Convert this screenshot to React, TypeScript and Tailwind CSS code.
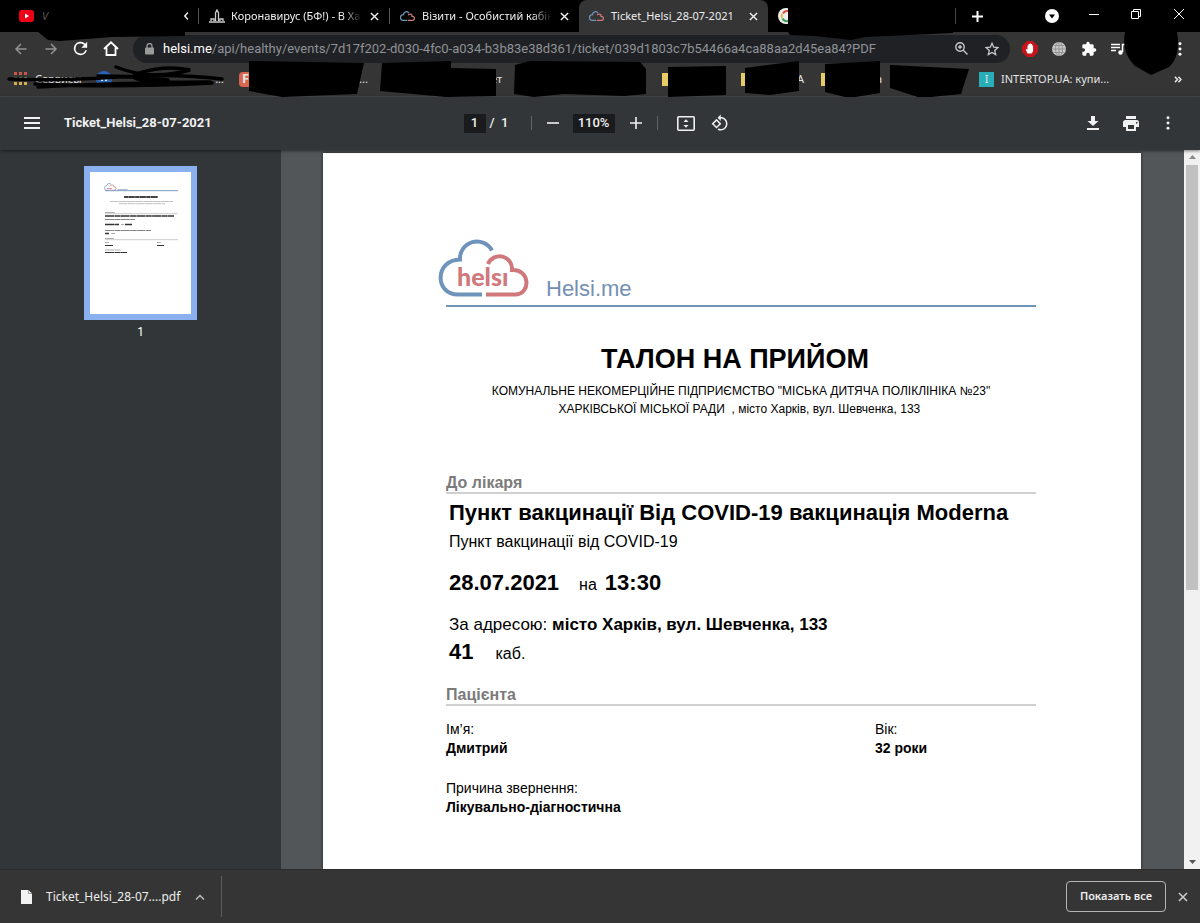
import React from 'react';

function Cloud({ className, stroke = 4, word = true }: { className: string; stroke?: number; word?: boolean }) {
  return (
    <svg viewBox="0 0 92 60" className={className} fill="none" aria-hidden="true">
      <path d="M54 12.500A17 17 0 0 0 22 21.500C-3.500 22-3.500 56.500 20 56.500H44" stroke="#6f94bb" strokeWidth={stroke} />
      <path d="M50 26A12.500 12.500 0 0 1 74 32C92.500 31 93 56.500 77 56.500H48" stroke="#d0787b" strokeWidth={stroke} />
      {word && (
        <text x="19" y="48" fill="#d0787b" className="font-[Lato,sans-serif] text-[25px] font-black">helsı</text>
      )}
    </svg>
  );
}

function X({ className }: { className: string }) {
  return (
    <svg viewBox="0 0 10 10" className={className} stroke="currentColor" strokeWidth="1.6" aria-hidden="true">
      <path d="M1 1 9 9M9 1 1 9" />
    </svg>
  );
}

function Dots() {
  return (
    <svg viewBox="0 0 4 16" className="h-[14px] w-1" fill="currentColor" aria-hidden="true">
      <circle cx="2" cy="2" r="1.700" /><circle cx="2" cy="8" r="1.700" /><circle cx="2" cy="14" r="1.700" />
    </svg>
  );
}

function Tabs() {
  return (
    <div className="flex h-8 items-stretch bg-black text-[11px] text-[#eceef0]">
      <div className="flex w-[198px] items-center pl-[19px]">
        <svg viewBox="0 0 15 12" className="h-3 w-[15px]" aria-hidden="true"><rect width="15" height="12" rx="3" fill="#f00018" /><path d="M6 3.500v5L10 6z" fill="#fff" /></svg>
        <span className="ml-2 italic text-[#555]">V</span>
        <button aria-label="Закрити вкладку" className="ml-auto mr-[10px]"><svg viewBox="0 0 4 8" className="h-2 w-1" fill="none" stroke="currentColor" strokeWidth="1.500" aria-hidden="true"><path d="M4 .5.8 4 4 7.500" /></svg></button>
      </div>
      <div className="my-2 flex w-[191px] items-center border-l border-l-[#555] pl-[10px]">
        <svg viewBox="0 0 16 14" className="h-[14px] w-4 shrink-0" fill="none" stroke="#ccc" strokeWidth="1.300" aria-hidden="true"><path d="M0 13h16M2 12V10h3v2M6.500 12V4L8 1l1.500 3v8M11 12v-2h3v2" /></svg>
        <span className="ml-[6px] w-[131px] whitespace-nowrap [mask-image:linear-gradient(to_right,black_85%,transparent)]">Коронавирус (БФ!) - В Ха</span>
        <button aria-label="Закрити вкладку" className="ml-2"><X className="size-[9px]" /></button>
      </div>
      <div className="my-2 flex w-[190px] items-center border-l border-l-[#555] pl-[10px]">
        <Cloud className="h-[10px] w-[15px]" stroke={8} word={false} />
        <span className="ml-[7px] w-[130px] whitespace-nowrap [mask-image:linear-gradient(to_right,black_85%,transparent)]">Візити - Особистий кабін</span>
        <button aria-label="Закрити вкладку" className="ml-2"><X className="size-[9px]" /></button>
      </div>
      <div className="flex w-[189px] items-center rounded-t-lg bg-[#353535] pl-[10px]">
        <Cloud className="h-[10px] w-[15px]" stroke={8} word={false} />
        <span className="ml-[7px] w-[130px] whitespace-nowrap">Ticket_Helsi_28-07-2021</span>
        <button aria-label="Закрити вкладку" className="ml-2"><X className="size-[9px]" /></button>
      </div>
      <div className="my-2 flex w-[188px] items-center border-r border-r-[#444] pl-[10px]">
        <svg viewBox="0 0 10 16" className="h-4 w-[10px]" aria-hidden="true"><circle cx="8" cy="8" r="8" fill="#eee" /><path d="M10 3a5 5 0 0 0-5 2.500" stroke="#e24b3d" strokeWidth="2" fill="none" /><path d="M4 6a5 5 0 0 0 0 4" stroke="#e9b53a" strokeWidth="2" fill="none" /><path d="M4.500 10.500A5 5 0 0 0 10 13" stroke="#3a9d54" strokeWidth="2" fill="none" /></svg>
      </div>
      <button aria-label="Нова вкладка" className="ml-4 text-white"><svg viewBox="0 0 11 11" className="size-[11px]" stroke="currentColor" strokeWidth="2" aria-hidden="true"><path d="M5.500 0v11M0 5.500h11" /></svg></button>
      <div className="ml-auto flex items-center pr-4 text-white">
        <button aria-label="Пошук вкладок"><svg viewBox="0 0 14 14" className="size-[14px]" aria-hidden="true"><circle cx="7" cy="7" r="7" fill="#fff" /><path d="M4 5.500h6L7 9.500z" fill="#000" /></svg></button>
        <button aria-label="Згорнути" className="ml-[30px] pb-1"><svg viewBox="0 0 10 10" className="size-[10px]" stroke="currentColor" aria-hidden="true"><path d="M0 5.500h10" /></svg></button>
        <button aria-label="Відновити" className="ml-8 pb-1"><svg viewBox="0 0 10 10" className="size-[10px]" fill="none" stroke="currentColor" aria-hidden="true"><path d="M.5 2.500h7v7h-7zM2.500 2V.5h7v7H8" /></svg></button>
        <button aria-label="Закрити" className="ml-[33px] pb-1"><svg viewBox="0 0 10 10" className="size-[10px]" stroke="currentColor" aria-hidden="true"><path d="M0 0l10 10M10 0L0 10" /></svg></button>
      </div>
    </div>
  );
}

const arrow = 'M12 6H1.500M6.500 1l-5 5 5 5';

function AddressBar() {
  return (
    <div className="flex h-8 items-center pl-[14px] pr-[18px] pt-px text-white">
      <button aria-label="Назад" className="text-[#929292]"><svg viewBox="0 0 13 12" className="h-3 w-[14px]" fill="none" stroke="currentColor" strokeWidth="1.500" aria-hidden="true"><path d={arrow} /></svg></button>
      <button aria-label="Вперед" className="ml-4 rotate-180 text-[#929292]"><svg viewBox="0 0 13 12" className="h-3 w-[14px]" fill="none" stroke="currentColor" strokeWidth="1.500" aria-hidden="true"><path d={arrow} /></svg></button>
      <button aria-label="Оновити" className="ml-[15px]"><svg viewBox="3 3 18 18" className="size-[15px]" fill="currentColor" aria-hidden="true"><path d="M17.650 6.350A8 8 0 1 0 19.730 14h-2.080A6 6 0 1 1 12 6c1.660 0 3.140.69 4.220 1.780L13 11h7V4z" /></svg></button>
      <button aria-label="Головна" className="ml-[15px]"><svg viewBox="0 0 16 15" className="h-[15px] w-4" fill="none" stroke="currentColor" strokeWidth="1.800" aria-hidden="true"><path d="M1 8 8 1.300 15 8M3.500 6.500V14h9V6.500" /></svg></button>
      <div className="ml-[14px] flex h-7 w-[877px] items-center rounded-full bg-[#202124] pl-3 pr-[11px]">
        <svg viewBox="0 0 9 12" className="h-3 w-[9px]" fill="#9a9a9a" aria-hidden="true"><rect y="4.500" width="9" height="7" rx="1" /><path d="M2 5V3a2.500 2.500 0 0 1 5 0v2" fill="none" stroke="#9a9a9a" strokeWidth="1.300" /></svg>
        <span className="ml-[9px] whitespace-nowrap font-[Roboto,sans-serif] text-[13px] text-[#8f9398]"><span className="text-white">helsi.me</span>/api/healthy/events/7d17f202-d030-4fc0-a034-b3b83e38d361/ticket/039d1803c7b54466a4ca88aa2d45ea84?PDF</span>
        <button aria-label="Масштаб" className="ml-auto text-[#c8c8c8]"><svg viewBox="0 0 13 13" className="size-[13px]" fill="none" stroke="currentColor" strokeWidth="1.400" aria-hidden="true"><circle cx="5" cy="5" r="4.200" /><path d="M8 8l4.500 4.500M5 3v4M3 5h4" /></svg></button>
        <button aria-label="Додати закладку" className="ml-[17px] text-[#c8c8c8]"><svg viewBox="0 0 14 14" className="size-[14px]" fill="none" stroke="currentColor" strokeWidth="1.300" aria-hidden="true"><path d="M7 1.300l1.700 3.900 4.200.4-3.200 2.800 1 4.200L7 10.400l-3.700 2.200 1-4.200L1.100 5.600l4.200-.4z" /></svg></button>
      </div>
      <button aria-label="AdBlock" className="ml-3"><svg viewBox="0 0 16 16" className="size-4" aria-hidden="true"><path d="M5 0h6l5 5v6l-5 5H5l-5-5V5z" fill="#c4161c" /><path d="M5.500 12.500 3.700 8.500l1-.5.8 1V4.500h1V3h1.200v-.500h1.200V3h1.200v1.500h1V9c0 2-1 3-1.600 3.500z" fill="#fff" /></svg></button>
      <button aria-label="Розширення VPN" className="ml-[14px]"><svg viewBox="0 0 14 14" className="size-[14px]" aria-hidden="true"><circle cx="7" cy="7" r="7" fill="#c9c9c9" /><path d="M7 0v14M0 7h14M1.500 3.500h11M1.500 10.500h11" stroke="#888" strokeWidth=".8" /><ellipse cx="7" cy="7" rx="3.500" ry="7" fill="none" stroke="#888" strokeWidth=".8" /></svg></button>
      <button aria-label="Розширення" className="ml-[15px]"><svg viewBox="0 0 24 24" className="size-4" fill="currentColor" aria-hidden="true"><path d="M20.500 11H19V7a2 2 0 0 0-2-2h-4V3.500a2.500 2.500 0 0 0-5 0V5H4a2 2 0 0 0-2 2v3.800h1.500a2.700 2.700 0 0 1 0 5.400H2V20a2 2 0 0 0 2 2h3.800v-1.500a2.700 2.700 0 0 1 5.400 0V22H17a2 2 0 0 0 2-2v-4h1.500a2.500 2.500 0 0 0 0-5z" /></svg></button>
      <button aria-label="Музика" className="ml-[14px]"><svg viewBox="0 0 14 12" className="h-3 w-[14px]" fill="none" stroke="currentColor" strokeWidth="1.500" aria-hidden="true"><path d="M0 1.500h9M0 4.500h9M0 7.500h5M11.500 9V1.500H14" /><circle cx="9.500" cy="9.500" r="1.500" fill="currentColor" /></svg></button>
      <button aria-label="Меню браузера" className="ml-auto"><Dots /></button>
    </div>
  );
}

function Bookmarks() {
  return (
    <div className="flex h-[30px] items-center pl-[14px] pr-[18px] text-[11px] text-[#e4e4e4]">
      <svg viewBox="0 0 14 14" className="h-[14px] w-[14px]" aria-hidden="true">
        {[0, 5, 10].map((x) => [0, 5, 10].map((y) => <rect key={x + '-' + y} x={x} y={y} width="3" height="3" fill={y === 0 ? '#c9584c' : y === 5 ? '#77a46a' : '#d3b04d'} />))}
      </svg>
      <span className="ml-[7px] w-[61px]">Сервисы</span>
      <svg viewBox="0 0 16 16" className="size-4" aria-hidden="true"><circle cx="8" cy="8" r="8" fill="#2c62b4" /><path d="M4 6l2 4 2-4 2 4 2-4" stroke="#fff" fill="none" /></svg>
      <span className="ml-2 w-[104px] whitespace-nowrap text-right">...</span>
      <span className="ml-[15px] flex h-[15px] w-[15px] items-center rounded-sm bg-[#d9674f] pl-[3px] text-[13px] font-bold">F</span>
      <span className="ml-[105px] w-[10px]">...</span>
      <span className="ml-[122px] w-3">ет</span>
      <span className="ml-[159px] h-[13px] w-[6px] bg-[#e8cd67]" />
      <span className="ml-[50px] w-[7px]">ы</span>
      <span className="ml-[16px] h-[13px] w-[6px] bg-[#e8cd67]" />
      <span className="ml-[50px] w-[8px]">А</span>
      <span className="ml-[16px] h-[13px] w-[4px] bg-[#e8cd67]" />
      <span className="ml-[51px] w-[7px]">а</span>
      <span className="ml-[96px] flex h-[15px] w-[15px] items-center justify-center bg-[#27aeb9]">I</span>
      <a href="#intertop" className="ml-[7px] whitespace-nowrap">INTERTOP.UA: купи...</a>
      <button aria-label="Інші закладки" className="ml-auto"><svg viewBox="0 0 9 8" className="h-[7px] w-2" fill="none" stroke="currentColor" strokeWidth="1.700" aria-hidden="true"><path d="M1 1l3 3-3 3M5 1l3 3-3 3" /></svg></button>
    </div>
  );
}

function Scribbles() {
  return (
    <svg width="1200" height="98" viewBox="0 0 1200 98" className="pointer-events-none absolute left-0 top-0" aria-hidden="true">
      <path d="M37 31H185V36L112 37 60 41 48 40z M787 30H953V33L865 37 851 40 815 36 790 35z M249 61l115 2-7 31-75 3-33-6z M382 63l69-2v7l45 1v27l-50 1-66-6z M515 65l15-4 110 1 6 7v25l-22 2-60-2-30 3-20-3z M668 67l58-1v29l-58 2z M745 68l54-7v30l-29 4-25-2z M825 64l55-3v32l-31 5-24-6z M890 65l79 4-8 25-40 4-31-10z" fill="#000" />
      <path d="M1125 32h52q4 24-8 35l-18 8-16-9q-14-14-10-34z" fill="#000" />
      <path d="M9 79q50 2 108-2t105 2M35 84q80 4 177-1M38 87q70-4 172-5M116 67q35 14 74 3-25-5-50 3t50 10M98 76q40 0 70 4" stroke="#000" strokeWidth="3.500" fill="none" strokeLinecap="round" />
    </svg>
  );
}

function PdfToolbar() {
  return (
    <div className="relative z-10 grid h-[53px] grid-cols-[1fr_auto_1fr] items-center bg-[#323639] pb-px font-[Roboto,sans-serif] text-[13px] text-[#f1f1f1] shadow-[0_1px_3px_rgba(0,0,0,0.5)]">
      <div className="flex items-center pl-6">
        <button aria-label="Меню"><svg viewBox="0 0 16 12" className="h-3 w-4" stroke="currentColor" strokeWidth="2" aria-hidden="true"><path d="M0 1h16M0 6h16M0 11h16" /></svg></button>
        <h1 className="ml-6 font-bold">Ticket_Helsi_28-07-2021</h1>
      </div>
      <div className="mr-2 flex items-center font-medium">
        <input aria-label="Сторінка" defaultValue="1" className="h-[19px] w-[22px] bg-[#191b1c] text-center" />
        <span className="ml-1 w-[41px] whitespace-pre">/  1</span>
        <span className="h-[14px] border-l border-[#606366]" />
        <button aria-label="Зменшити" className="ml-[15px]"><svg viewBox="0 0 12 12" className="size-3" stroke="currentColor" strokeWidth="1.600" aria-hidden="true"><path d="M0 6h12" /></svg></button>
        <input aria-label="Масштаб сторінки" defaultValue="110%" className="ml-[14px] h-[19px] w-[42px] bg-[#191b1c] text-center" />
        <button aria-label="Збільшити" className="ml-[15px]"><svg viewBox="0 0 12 12" className="size-3" stroke="currentColor" strokeWidth="1.600" aria-hidden="true"><path d="M0 6h12M6 0v12" /></svg></button>
        <span className="ml-[15px] h-[14px] border-l border-[#606366]" />
        <button aria-label="За розміром сторінки" className="ml-[19px]"><svg viewBox="0 0 18 15" className="h-[15px] w-[18px]" fill="none" stroke="currentColor" strokeWidth="1.600" aria-hidden="true"><rect x=".8" y=".8" width="16.400" height="13.400" rx="1" /><path d="M6.500 5.900 9 3.200l2.500 2.700zM6.500 9.100 9 11.800l2.500-2.700z" fill="currentColor" stroke="none" /></svg></button>
        <button aria-label="Повернути" className="ml-4"><svg viewBox="0 0 24 24" className="size-[18px]" fill="currentColor" aria-hidden="true"><path d="M7.340 6.410L.86 12.900l6.490 6.480 6.490-6.480-6.500-6.490zM3.690 12.900l3.660-3.660L11 12.900l-3.660 3.660-3.650-3.660zm15.670-6.260C17.610 4.880 15.300 4 13 4V.76L8.760 5 13 9.240V6c1.790 0 3.580.68 4.950 2.050 2.730 2.730 2.730 7.170 0 9.900C16.580 19.320 14.790 20 13 20c-.97 0-1.940-.21-2.840-.61l-1.490 1.490C10.020 21.620 11.510 22 13 22c2.300 0 4.610-.88 6.360-2.640 3.520-3.510 3.520-9.210 0-12.720z" /></svg></button>
      </div>
      <div className="flex items-center justify-end pr-[30px]">
        <button aria-label="Завантажити"><svg viewBox="0 0 12 14" className="h-[14px] w-3" fill="currentColor" aria-hidden="true"><path d="M4 0h4v5h3.500L6 10 .5 5H4zM0 12h12v2H0z" /></svg></button>
        <button aria-label="Друк" className="ml-6"><svg viewBox="0 0 16 15" className="h-[15px] w-4" fill="currentColor" aria-hidden="true"><path d="M3 0h10v3H3zM2.500 4h11A2.500 2.500 0 0 1 16 6.500V11h-3v4H3v-4H0V6.500A2.500 2.500 0 0 1 2.500 4zM5 9v4h6V9zM13 6v1.500h1.500V6z" fillRule="evenodd" /></svg></button>
        <button aria-label="Ще" className="ml-[27px]"><Dots /></button>
      </div>
    </div>
  );
}

function Thumbnail() {
  return (
    <aside className="flex w-[281px] shrink-0 flex-col items-center bg-[#323639] pt-4">
      <button aria-label="Сторінка 1" className="bg-[#8ab0f0] p-[6px]">
        <span className="block h-[142px] w-[101px] overflow-hidden bg-white">
          <svg viewBox="0 0 101 142" className="h-full w-full" fill="none" aria-hidden="true">
            <path d="M21 12.200A2.500 2.500 0 0 0 16.800 13.500C13.600 14 14 18.200 16.600 18.200H19.500" stroke="#6f94bb" strokeWidth=".8" />
            <path d="M20 14.200c1.500-2.200 4-1.400 4 .6 2.800.2 2.600 3.400.2 3.400H20M17 16.500h5" stroke="#d0787b" strokeWidth=".8" />
            <path d="M27.500 17.500h10" stroke="#a9bdd6" strokeWidth="1" />
            <path d="M15 18.700h73" stroke="#7d9cc0" />
            <path d="M34 25h34" stroke="#444" strokeWidth="1.800" strokeDasharray="4.500 .3 6 .3" />
            <path d="M20 29.500h63M29 31.700h46" strokeWidth=".6" stroke="#999" strokeDasharray="8 .5" />
            <path d="M15 41.700h73M15 67.700h73" stroke="#aaa" strokeWidth=".6" />
            <g stroke="#333" strokeDasharray="9 .4 6 .3">
              <path d="M15 44h69" strokeWidth="1.700" />
              <path d="M15 47.500h30M15 58.500h46" strokeWidth=".8" stroke="#666" />
              <path d="M15 52.500h14M35 52.500h7M15 61.500h4" strokeWidth="1.600" />
              <path d="M15 40.500h10M31 52.500h3M21 61.500h4M15 66.500h9M15 70.500h4M67 70.500h4M15 78h16" strokeWidth=".6" stroke="#777" />
              <path d="M15 73.500h8M67 73.500h7M15 80.500h22" strokeWidth="1.100" />
            </g>
          </svg>
        </span>
      </button>
      <span className="mt-1 font-[Roboto,sans-serif] text-[12px] leading-4 text-white">1</span>
    </aside>
  );
}

function Ticket() {
  return (
    <article className="ml-[42px] mr-[43px] mt-[3px] min-w-0 flex-1 bg-white pl-[123px] pr-[105px] pt-[85px] font-['Liberation_Sans',sans-serif] text-black shadow-[0_0_3px_rgba(0,0,0,0.6)]">
      <div className="-ml-2 flex h-[63px] items-start">
        <Cloud className="h-[60px] w-[92px]" />
        <a href="#helsi" className="ml-4 self-end text-[22px] leading-6 text-[#7390b4]">Helsi.me</a>
      </div>
      <div className="mt-1 border-t-2 border-[#7094b8]" />
      <h2 className="mt-[36px] pr-3 text-center text-[27px] font-bold leading-8">ТАЛОН НА ПРИЙОМ</h2>
      <p className="mt-[7px] whitespace-pre text-center text-[12px] leading-[18px]">{'КОМУНАЛЬНЕ НЕКОМЕРЦІЙНЕ ПІДПРИЄМСТВО "МІСЬКА ДИТЯЧА ПОЛІКЛІНІКА №23"\nХАРКІВСЬКОЇ МІСЬКОЇ РАДИ  , місто Харків, вул. Шевченка, 133 '}</p>
      <h3 className="mt-[55px] border-b-2 border-[#d0d0d0] text-[16px] font-bold leading-[19px] text-[#7b7b7b]">До лікаря</h3>
      <p className="ml-[3px] mt-[5px] whitespace-nowrap text-[22px] font-bold leading-7">Пункт вакцинації Від COVID-19 вакцинація Moderna</p>
      <p className="ml-[3px] mt-[3px] text-[16px] leading-6">Пункт вакцинації від COVID-19</p>
      <p className="ml-[3px] mt-[15px] flex items-baseline text-[22px] font-bold leading-7">28.07.2021<span className="ml-5 mr-2 text-[16px] font-normal">на</span>13:30</p>
      <p className="ml-[3px] mt-[14px] text-[17px] leading-6">За адресою: <b>місто Харків, вул. Шевченка, 133</b></p>
      <p className="ml-[3px] mt-px flex items-baseline text-[22px] font-bold leading-7">41<span className="ml-[22px] text-[16px] font-normal">каб.</span></p>
      <h3 className="mt-[17px] border-b-2 border-[#d0d0d0] text-[16px] font-bold leading-[19px] text-[#7b7b7b]">Пацієнта</h3>
      <dl className="mt-[14px] grid grid-cols-[429px_1fr] gap-y-[21px] text-[14px] leading-[19px]">
        <div><dt>Ім’я:</dt><dd className="font-bold">Дмитрий</dd></div>
        <div><dt>Вік:</dt><dd className="font-bold">32 роки</dd></div>
        <div><dt>Причина звернення:</dt><dd className="font-bold">Лікувально-діагностична</dd></div>
      </dl>
    </article>
  );
}

export default function App() {
  return (
    <div className="flex h-screen flex-col overflow-hidden bg-[#353535] font-['Noto_Sans','Open_Sans',sans-serif]">
      <header className="relative shrink-0">
        <Tabs />
        <AddressBar />
        <Bookmarks />
        <Scribbles />
      </header>
      <div className="mt-[2px] flex min-h-0 flex-1 flex-col border-t border-[#47494b]">
        <PdfToolbar />
        <main className="flex min-h-0 flex-1 overflow-hidden bg-[#525659]">
          <Thumbnail />
          <Ticket />
          <div className="flex w-4 shrink-0 flex-col items-center bg-[#f1f1f1] py-[5px]" aria-hidden="true">
            <svg viewBox="0 0 7 4" className="h-1 w-[7px] shrink-0" fill="#888"><path d="M0 4 3.500 0 7 4z" /></svg>
            <div className="mt-[6px] h-[425px] w-3 bg-[#c1c1c1]" />
            <svg viewBox="0 0 7 4" className="mt-auto h-1 w-[7px] shrink-0" fill="#555"><path d="M0 0 3.500 4 7 0z" /></svg>
          </div>
        </main>
      </div>
      <footer className="flex h-[54px] shrink-0 items-center border-t border-[#292b2d] bg-[#353535] pl-[21px] pr-3 text-[12px] text-[#eee]">
        <svg viewBox="0 0 11 14" className="h-[14px] w-[11px]" aria-hidden="true"><path d="M0 0h7.500L11 3.500V14H0z" fill="#f2f2f2" /><path d="M7.500 0v3.500H11" fill="none" stroke="#888" strokeWidth=".8" /></svg>
        <a href="#file" className="ml-[14px] w-[130px] whitespace-nowrap">Ticket_Helsi_28-07....pdf</a>
        <button aria-label="Дії з файлом" className="ml-[19px]"><svg viewBox="0 0 10 6" className="h-[6px] w-[10px]" fill="none" stroke="#bbb" strokeWidth="1.500" aria-hidden="true"><path d="M1 5.500l4-4 4 4" /></svg></button>
        <span className="ml-4 h-[41px] border-l border-[#5e5e5e]" />
        <button className="ml-auto h-[31px] w-[100px] whitespace-nowrap rounded border border-[#b5b5b5] text-[11px] font-semibold">Показать все</button>
        <button aria-label="Закрити панель" className="ml-3 text-[#ccc]"><X className="size-[10px]" /></button>
      </footer>
    </div>
  );
}
